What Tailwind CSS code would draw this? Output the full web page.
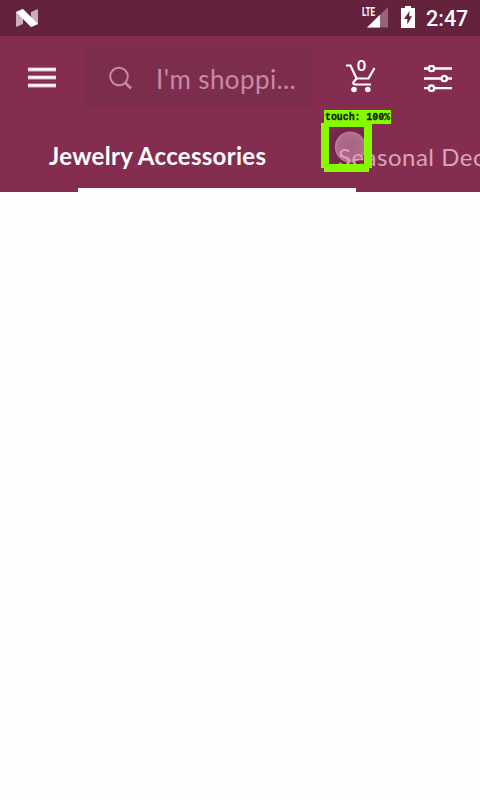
<!DOCTYPE html>
<html lang="en">
<head>
<meta charset="utf-8">
<meta name="viewport" content="width=device-width">
<title>Shop</title>
<script src="https://cdn.jsdelivr.net/npm/@tailwindcss/browser@4"></script>
</head>
<body class="bg-[#fefefe] w-[480px] h-[800px] overflow-hidden font-['Lato',sans-serif]">
<div class="h-9 bg-[#64223c] flex items-center justify-between pl-4 pr-3">
  <svg class="w-[22px] h-[18px]" viewBox="0 0 22 18"><path d="M0 3L7 0V15L0 18zM15 3L22 0V15L15 18z" fill="#c9aeba"/><path d="M0 3L7 0L22 15L15 18z" fill="#fff"/></svg>
  <div class="flex items-center h-9">
    <svg class="w-[27px] h-[22px] mr-3 overflow-visible" viewBox="0 0 27 22"><path d="M26 0V20.5H5z" fill="#95657a"/><path d="M18 7.8V20.5H5z" fill="#fff"/><path d="M0 0H14.5V10.5H0z" fill="#64223c"/><text x="0" y="9.3" font-family="Roboto" font-weight="700" font-size="12.5" textLength="13" lengthAdjust="spacingAndGlyphs" fill="#fff">LTE</text></svg>
    <svg class="w-[14px] h-[22px] mr-[11px] -mt-[2px]" viewBox="0 0 14 22"><path d="M4 0H10V2H14V22H0V2H4z" fill="#fff"/><path d="M8.5 5L3 13H6.3V18.5L11 10.3H8.2z" fill="#64223c"/></svg>
    <span class="font-['Roboto',sans-serif] font-medium text-[21.5px] leading-9 text-white w-[42px] whitespace-nowrap pt-[1px]">2:47</span>
  </div>
</div>
<header class="h-[156px] bg-[#842d50] overflow-hidden">
  <div class="h-[83px] flex items-center pl-7">
    <svg class="w-7 h-[21px]" viewBox="0 0 28 21"><path d="M0 .5H28V4.5H0zM0 8.5H28V12.5H0zM0 16.5H28V20.5H0z" fill="#d3aabd"/><path d="M0 1.3H28V3.5H0zM0 9.3H28V11.5H0zM0 17.3H28V19.5H0z" fill="#fff"/></svg>
    <div class="ml-7 w-[228px] h-[59px] rounded-[3px] bg-[#7b2d4b] flex items-center pl-[25px]">
      <svg class="w-[23px] h-[24px]" viewBox="0 0 23 24" fill="none" stroke="#c789a4" stroke-width="2"><circle cx="10" cy="10.5" r="8.8"/><path d="M16.5 17L22 22.5" stroke-width="2.6"/></svg>
      <span class="ml-[24px] pt-[4px] text-[26px] tracking-[0.4px] text-[#c789a4] whitespace-nowrap">I'm shoppi...</span>
    </div>
    <svg class="ml-[34px] w-[30px] h-[32px] overflow-visible" viewBox="0 0 30 32" fill="none" stroke="#fff" stroke-width="2.2"><path d="M0 3.5H4.5L10.5 16.5H22.5L28.5 6M10.5 16.5L7.3 20.5Q7 22.5 9.5 22.5H25"/><circle cx="8" cy="27.5" r="2.8" fill="#fff" stroke="none"/><circle cx="21.8" cy="27.5" r="2.8" fill="#fff" stroke="none"/><text x="11" y="9" font-family="Lato" font-weight="700" font-size="14.5" textLength="9" lengthAdjust="spacingAndGlyphs" fill="#fff" stroke="none">0</text></svg>
    <svg class="ml-[48px] w-7 h-[27px] mt-[2px]" viewBox="0 0 28 27" fill="none" stroke="#fff" stroke-width="2.3"><path d="M0 3.5H5M10 3.5H28M0 13.5H18M23 13.5H28M0 23.2H5M10 23.2H28"/><circle cx="7.5" cy="3.5" r="2.7"/><circle cx="20.3" cy="13.5" r="2.7"/><circle cx="7.5" cy="23.2" r="2.7"/></svg>
  </div>
  <nav class="h-[69px] flex items-center pl-[49px] whitespace-nowrap">
    <span class="w-[289px] shrink-0 text-[24px] leading-[30px] tracking-[0.3px] font-bold text-white pt-[5px]">Jewelry Accessories</span>
    <span class="relative z-20 shrink-0 text-[24px] leading-[30px] tracking-[0.5px] text-[#dba3bb] pt-[7px]">Seasonal Decor</span>
  </nav>
  <div class="ml-[78px] w-[278px] h-1 bg-white"></div>
</header>
<main></main>
<div class="absolute z-10 left-[321px] top-[110px] w-[71px] h-[62px]">
  <svg class="w-[71px] h-[62px]" viewBox="0 0 71 62">
    <defs><radialGradient id="halo"><stop offset=".55" stop-color="#702548"/><stop offset="1" stop-color="#7f2c50"/></radialGradient><radialGradient id="spot"><stop offset="0" stop-color="#a86485"/><stop offset=".8" stop-color="#ad6a8a"/><stop offset="1" stop-color="#bb7b99"/></radialGradient><clipPath id="inside"><path d="M8 17H43V54H8z"/></clipPath></defs>
    <g clip-path="url(#inside)"><circle cx="29" cy="37" r="27" fill="url(#halo)"/><circle cx="29.3" cy="37" r="15.5" fill="url(#spot)"/></g>
  </svg>
</div>
<div class="absolute z-30 left-[321px] top-[110px] w-[71px] h-[62px]">
  <svg class="w-[71px] h-[62px] overflow-visible" viewBox="0 0 71 62"><path fill="#86fb00" fill-rule="evenodd" d="M3 0H70V14H51V58H48V62H3V58H0V13H3zM8 17V54H43V17z"/><text x="4" y="10" font-family="Liberation Mono" font-weight="700" font-size="10.5" textLength="65" lengthAdjust="spacingAndGlyphs" fill="#102000" stroke="#102000" stroke-width=".3">touch: 100%</text></svg>
</div>
</body>
</html>
